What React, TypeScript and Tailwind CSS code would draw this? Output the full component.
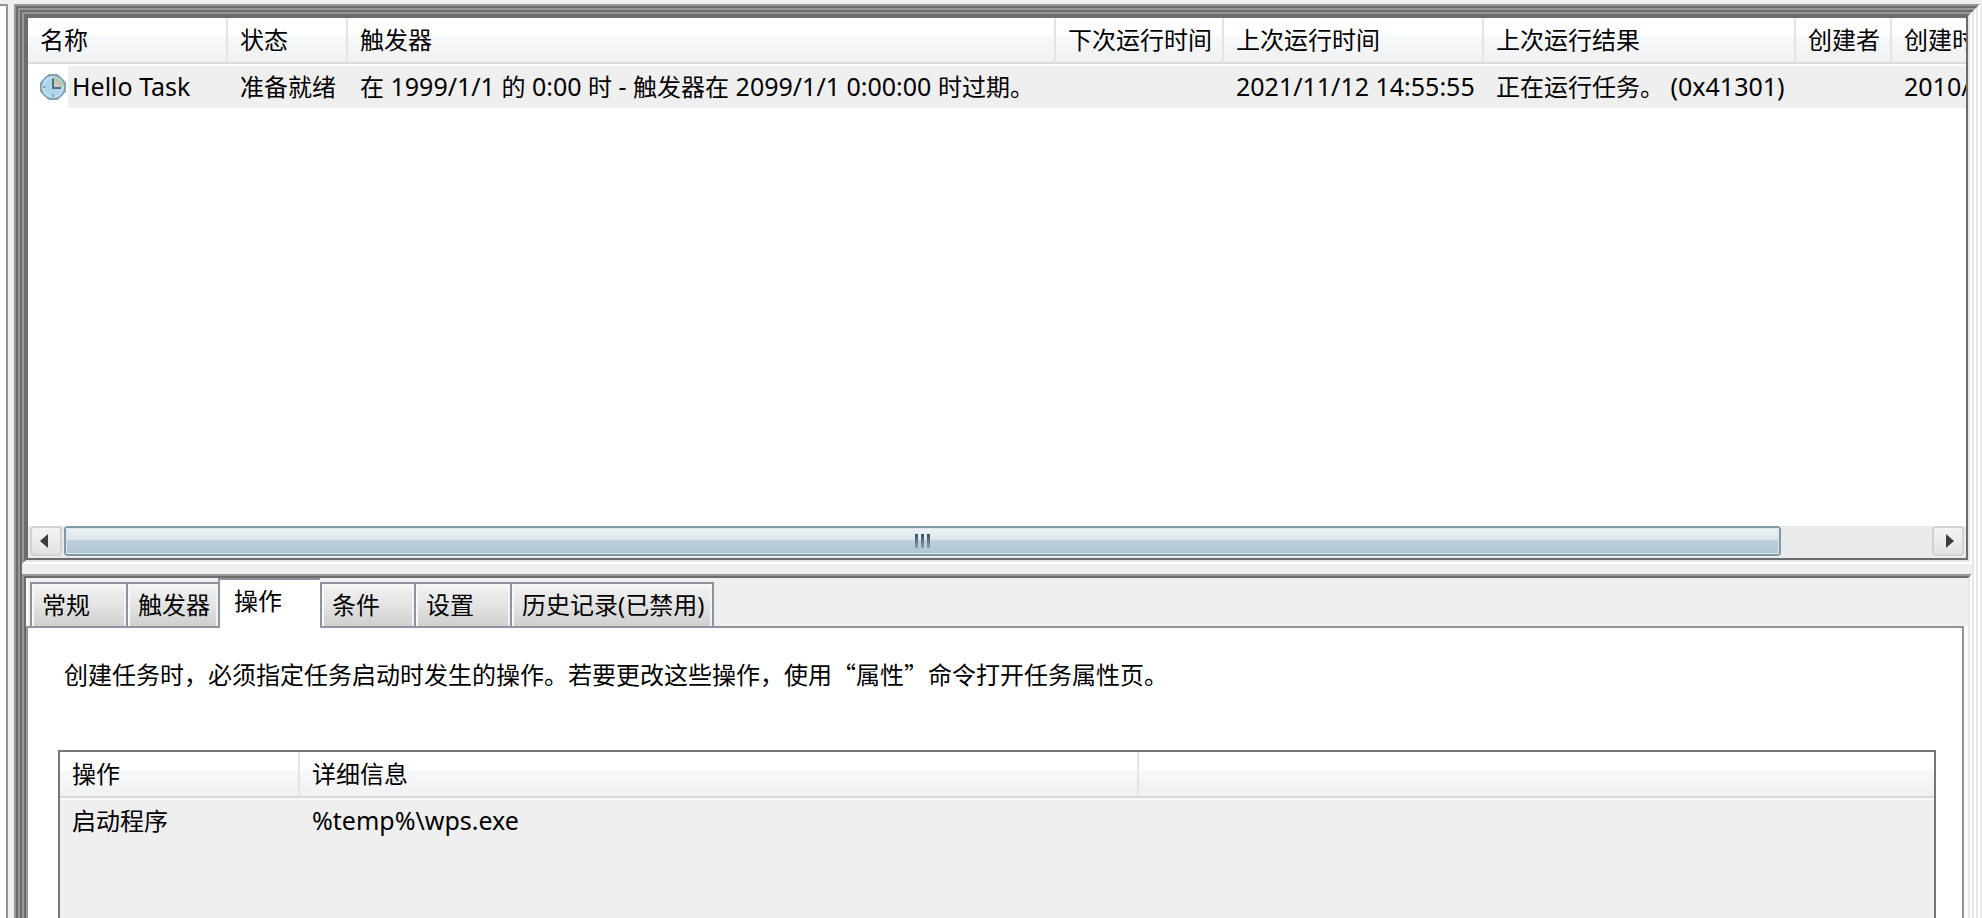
import type { ReactNode } from 'react';

const taskColumns = [
  { label: '名称', width: 'w-[200px]' },
  { label: '状态', width: 'w-[120px]' },
  { label: '触发器', width: 'w-[708px]' },
  { label: '下次运行时间', width: 'w-[168px]' },
  { label: '上次运行时间', width: 'w-[260px]' },
  { label: '上次运行结果', width: 'w-[312px]' },
  { label: '创建者', width: 'w-[96px]' },
  { label: '创建时间', width: 'w-[260px]' },
];

const taskCells = [
  '准备就绪',
  '在 1999/1/1 的 0:00 时 - 触发器在 2099/1/1 0:00:00 时过期。',
  '',
  '2021/11/12 14:55:55',
  '正在运行任务。 (0x41301)',
  '',
  '2010/11/12 0:00:00',
];

const tabs = [
  { label: '常规', width: 'w-[96px]' },
  { label: '触发器', width: 'w-[92px]' },
  { label: '操作', width: 'w-[102px]', active: true },
  { label: '条件', width: 'w-[94px]' },
  { label: '设置', width: 'w-[96px]' },
  { label: '历史记录(已禁用)', width: 'w-[204px]' },
];

/** Sets Latin runs one pixel larger, so that they balance the Chinese glyphs. */
function MixedText({ text }: { text: string }) {
  return (
    <span className="whitespace-pre">
      {text.split(/([\x20-\x7e]+)/).map((run, index) =>
        index % 2 === 1 ? (
          <span key={index} className="text-[25px] leading-none">
            {run}
          </span>
        ) : (
          run
        ),
      )}
    </span>
  );
}

/** Two-step sunken edge: dark on the top and left, light on the bottom and right. */
function Sunken({ className, children }: { className: string; children: ReactNode }) {
  return (
    <div className={`flex min-h-0 min-w-0 border-2 border-t-[#989898] border-r-white border-b-white border-l-[#989898] ${className}`}>
      <div className="flex min-h-0 min-w-0 flex-1 flex-col border-2 border-t-[#6c6c6c] border-r-[#e6e6e6] border-b-[#e6e6e6] border-l-[#6c6c6c]">
        {children}
      </div>
    </div>
  );
}

/** Same edge without a bottom, for frames that run past the window. */
function OpenFrame({ children }: { children: ReactNode }) {
  return (
    <div className="flex min-h-0 min-w-0 flex-1 border-2 border-b-0 border-t-[#989898] border-r-white border-l-[#989898]">
      <div className="flex min-h-0 min-w-0 flex-1 flex-col border-2 border-b-0 border-t-[#6c6c6c] border-r-[#e6e6e6] border-l-[#6c6c6c]">
        {children}
      </div>
    </div>
  );
}

function HeaderCell({ label, last }: { label: string; last?: boolean }) {
  return (
    <th
      scope="col"
      className={`h-[46px] border-b-2 border-b-[#d8d9db] bg-linear-to-b from-white from-40% via-[#f7f8fa] via-40% to-[#f0f1f3] p-0 pl-3 text-left font-normal ${
        last ? '' : 'border-r-2 border-r-[#e3e4e6]'
      }`}
    >
      {label}
    </th>
  );
}

function ClockIcon() {
  return (
    <svg viewBox="0 0 28 28" className="h-7 w-7 shrink-0" aria-hidden="true">
      <path d="M9.500 1h9l8.500 8.500v9L18.500 27h-9L1 18.500v-9z" fill="#8aa8bc" />
      <circle cx="14" cy="14" r="12.600" fill="#7f9fb5" />
      <circle cx="14" cy="14" r="11" fill="#c6e0ee" />
      <circle cx="14" cy="14" r="9" fill="#b0d5ea" />
      <path d="M14 14V4l3-.5A10.500 10.500 0 0 1 24.500 14z" fill="#b4cbb0" />
      <path d="M15 14V7.500l8 6.500z" fill="#dcc6ba" />
      <path d="M14 5.500V15h8" fill="none" stroke="#47718c" strokeWidth="2" />
      <path d="M14 21.500v2.500M4 14h2.500" stroke="#6f96ae" strokeWidth="1.500" />
    </svg>
  );
}

function ScrollButton({ label, points }: { label: string; points: string }) {
  return (
    <button
      type="button"
      aria-label={label}
      className="flex w-8 shrink-0 items-center justify-center rounded-sm border-2 border-[#d2d2d2] bg-linear-to-b from-[#f4f4f4] to-[#e2e2e2]"
    >
      <svg viewBox="0 0 12 16" className="h-4 w-3" aria-hidden="true">
        <polygon points={points} fill="#3a3d40" />
      </svg>
    </button>
  );
}

function HorizontalScrollbar() {
  return (
    <div className="flex h-[32px] shrink-0 gap-[2px] bg-[#e9eaeb] px-[2px] pb-[2px]">
      <ScrollButton label="向左滚动" points="8,1 8,15 0,8" />
      <div className="flex min-w-0 flex-1">
        <div className="flex w-[92%] rounded-sm border-2 border-[#8097a8]">
          <div className="flex flex-1 items-center justify-center gap-[3px] border border-[#dce6eb] bg-[linear-gradient(#ecf2f5_0%,#dae5ea_46%,#bfd0da_47%,#b0c6d3_100%)]">
            <span className="h-[14px] w-[3px] bg-linear-to-b from-[#35505f] to-[#8aa3b1]" />
            <span className="h-[14px] w-[3px] bg-linear-to-b from-[#35505f] to-[#8aa3b1]" />
            <span className="h-[14px] w-[3px] bg-linear-to-b from-[#35505f] to-[#8aa3b1]" />
          </div>
        </div>
      </div>
      <ScrollButton label="向右滚动" points="4,1 4,15 12,8" />
    </div>
  );
}

function TaskList() {
  return (
    <div className="flex min-h-0 flex-1 flex-col border-2 border-[#6c6c6c] bg-white">
      <div className="min-h-0 flex-1 overflow-hidden">
        <table className="w-[2124px] table-fixed border-separate border-spacing-0 whitespace-nowrap">
          <colgroup>
            {taskColumns.map((column) => (
              <col key={column.label} className={column.width} />
            ))}
          </colgroup>
          <thead>
            <tr>
              {taskColumns.map((column) => (
                <HeaderCell key={column.label} label={column.label} />
              ))}
            </tr>
          </thead>
          <tbody>
            <tr>
              <td className="border-t-2 border-white p-0 pl-[11px]">
                <div className="flex h-[42px] items-center gap-px">
                  <ClockIcon />
                  <span className="flex h-full flex-1 items-center bg-[#efefef] pl-1">
                    <MixedText text="Hello Task" />
                  </span>
                </div>
              </td>
              {taskCells.map((cell, index) => (
                <td key={index} className="border-t-2 border-white bg-[#efefef] p-0 pl-3">
                  <MixedText text={cell} />
                </td>
              ))}
            </tr>
          </tbody>
        </table>
      </div>
      <HorizontalScrollbar />
    </div>
  );
}

function TabBar() {
  return (
    <div role="tablist" className="flex h-12 shrink-0 items-end border-l-2 border-white bg-[#efefef] pl-[2px]">
      {tabs.map((tab, index) => (
        <button
          key={tab.label}
          type="button"
          role="tab"
          aria-selected={Boolean(tab.active)}
          className={`shrink-0 border-t-2 border-l-2 border-[#8f929c] text-left whitespace-nowrap ${tab.width} ${
            tab.active
              ? 'relative -mb-[2px] h-[50px] bg-white pb-1.5 pl-[14px]'
              : 'h-[44px] bg-linear-to-b from-[#f3f3f3] from-0% via-[#e4e4e4] via-50% to-[#cfcfcf] pl-[10px] shadow-[inset_2px_2px_0_#f8f8f8,inset_-2px_0_0_#f3f3f3]'
          } ${index === tabs.length - 1 ? 'border-r-2' : ''}`}
        >
          {tab.label}
        </button>
      ))}
    </div>
  );
}

function ActionsTable() {
  return (
    <div className="mt-[60px] min-h-0 flex-1 overflow-hidden border-2 border-b-0 border-[#767676] bg-[#efefef]">
      <table className="w-full table-fixed border-separate border-spacing-0 whitespace-nowrap">
        <colgroup>
          <col className="w-[240px]" />
          <col className="w-[839px]" />
          <col />
        </colgroup>
        <thead>
          <tr>
            <HeaderCell label="操作" />
            <HeaderCell label="详细信息" />
            <HeaderCell label="" last />
          </tr>
        </thead>
        <tbody>
          <tr>
            <td className="h-[44px] border-t-2 border-[#f9f9fa] p-0 pl-3">启动程序</td>
            <td className="border-t-2 border-[#f9f9fa] p-0 pl-3">
              <MixedText text="%temp%\wps.exe" />
            </td>
            <td className="border-t-2 border-[#f9f9fa] p-0" />
          </tr>
        </tbody>
      </table>
    </div>
  );
}

export default function App() {
  return (
    <div
      lang="zh-CN"
      className="flex h-screen overflow-hidden bg-[#efefef] pt-1 pr-[2px] font-['Noto_Sans','Noto_Sans_CJK_SC',sans-serif] text-[24px] leading-8 text-black"
    >
      <aside className="mr-[6px] w-2 shrink-0 border-t-2 border-r-2 border-[#9094a0] bg-white" />
      <OpenFrame>
        <OpenFrame>
          <Sunken className="flex-1">
            <TaskList />
          </Sunken>
          <div className="h-[10px] shrink-0 cursor-row-resize bg-[#efefef]" />
          <div className="flex h-[344px] shrink-0 flex-col">
            <OpenFrame>
              <TabBar />
              <div className="flex min-h-0 flex-1 bg-white pr-1">
                <section
                  role="tabpanel"
                  aria-label="操作"
                  className="flex min-w-0 flex-1 flex-col border-2 border-b-0 border-[#9094a0] bg-white pt-[30px] pr-[26px] pl-[30px]"
                >
                  <p className="pl-[6px] font-['Noto_Sans_CJK_SC',sans-serif]">
                    创建任务时，必须指定任务启动时发生的操作。若要更改这些操作，使用“属性”命令打开任务属性页。
                  </p>
                  <ActionsTable />
                </section>
              </div>
            </OpenFrame>
          </div>
        </OpenFrame>
      </OpenFrame>
    </div>
  );
}
